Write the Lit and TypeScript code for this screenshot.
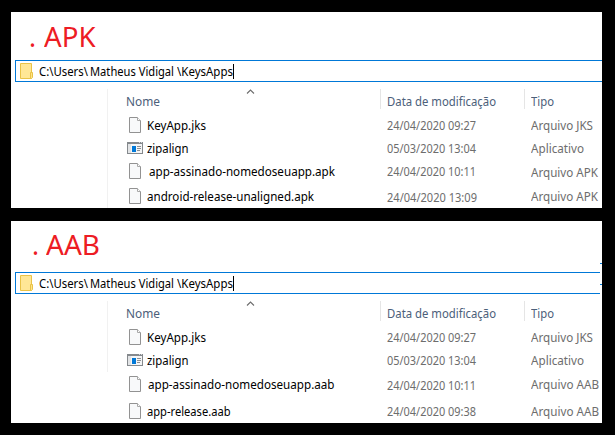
import { LitElement, html, svg, css, nothing } from "lit";
import { customElement, property } from "lit/decorators.js";
import { classMap } from "lit/directives/class-map.js";
import { styleMap } from "lit/directives/style-map.js";

interface Cell { text: string; width: number; dx?: number; dy?: number; }
interface FileRow { kind: "file" | "app"; gap: number; name: Cell; date: Cell; type: Cell; }
interface Panel { id: string; title: Cell; rows: FileRow[]; }

const panels: Panel[] = [
  {
    id: "apk",
    title: { text: "APK", width: 51.5 },
    rows: [
      { kind: "file", gap: 7, name: { text: "KeyApp.jks", width: 59 }, date: { text: "24/04/2020 09:27", width: 89 }, type: { text: "Arquivo JKS", width: 62 } },
      { kind: "app", gap: 7, name: { text: "zipalign", width: 41.5 }, date: { text: "05/03/2020 13:04", width: 89 }, type: { text: "Aplicativo", width: 53 } },
      { kind: "file", gap: 9, name: { text: "app-assinado-nomedoseuapp.apk", width: 186, dx: 2 }, date: { text: "24/04/2020 10:11", width: 89 }, type: { text: "Arquivo APK", width: 67, dy: 1 } },
      { kind: "file", gap: 0, name: { text: "android-release-unaligned.apk", width: 167 }, date: { text: "24/04/2020 13:09", width: 90, dy: 1 }, type: { text: "Arquivo APK", width: 67 } },
    ],
  },
  {
    id: "aab",
    title: { text: "AAB", width: 54 },
    rows: [
      { kind: "file", gap: 7, name: { text: "KeyApp.jks", width: 59 }, date: { text: "24/04/2020 09:27", width: 89 }, type: { text: "Arquivo JKS", width: 62 } },
      { kind: "app", gap: 8, name: { text: "zipalign", width: 41.5 }, date: { text: "05/03/2020 13:04", width: 89 }, type: { text: "Aplicativo", width: 53 } },
      { kind: "file", gap: 11, name: { text: "app-assinado-nomedoseuapp.aab", width: 186.5, dx: 1 }, date: { text: "24/04/2020 10:11", width: 89, dy: 1 }, type: { text: "Arquivo AAB", width: 68 } },
      { kind: "file", gap: 0, name: { text: "app-release.aab", width: 83.5 }, date: { text: "24/04/2020 09:38", width: 89 }, type: { text: "Arquivo AAB", width: 68 } },
    ],
  },
];

/** A single line of text condensed or widened to an exact width. */
@customElement("fit-text")
class FitText extends LitElement {
  @property() text = "";
  @property({ type: Number }) width = 0;

  static styles = css`
    :host { display: block; white-space: pre; }
    .line { display: inline-block; transform-origin: 0 0; vertical-align: top; }
  `;

  render() {
    return html`<span class="line">${this.text}</span>`;
  }

  updated() {
    const line = this.renderRoot.querySelector<HTMLElement>(".line")!;
    this.style.width = `${this.width}px`;
    line.style.transform = "none";
    const natural = line.getBoundingClientRect().width;
    if (natural) line.style.transform = `scaleX(${this.width / natural})`;
  }
}

const fit = (c: Cell) => html`<fit-text .text=${c.text} .width=${c.width}
  style=${styleMap({ marginLeft: `${c.dx ?? 0}px`, marginTop: `${c.dy ?? 0}px` })}></fit-text>`;

const fileIcon = html`<svg class="icon" width="16" height="16" viewBox="0 0 16 16">
  ${svg`<path d="M2.5 .5h8l3 3v12h-11z" fill="#f8f9fa" stroke="#929292"/>
  <path d="M10.5 .5v3h3" fill="#fff" stroke="#a8a8a8"/>`}
</svg>`;

const appIcon = html`<svg class="icon" width="16" height="12" viewBox="0 0 16 12" shape-rendering="crispEdges">
  ${svg`<rect width="16" height="12" fill="#85898d"/>
  <rect x="1" y="2" width="14" height="9" fill="#f4f5f6"/>
  <rect x="1" y="2" width="3" height="9" fill="#e2e4e6"/>
  <rect x="12" y="0" width="1" height="1" fill="#d5d7d9"/><rect x="14" y="0" width="1" height="1" fill="#d5d7d9"/>
  <rect x="5" y="4" width="4" height="6" fill="#0078d7"/>
  <path d="M10 4.5h4M10 6.5h4M10 8.5h3" stroke="#8c8f92"/>`}
</svg>`;

const folderIcon = html`<svg width="13" height="16" viewBox="0 0 13 16">
  ${svg`<path d="M.5 .5h11v15h-11z" fill="#ffe796" stroke="#e9c347"/>
  <path d="M10.5 9.5h2v5l-1 1h-1z" fill="#ffe389" stroke="#e9c347"/>`}
</svg>`;

@customElement("explorer-panel")
class ExplorerPanel extends LitElement {
  @property({ attribute: false }) panel!: Panel;

  static styles = css`
    :host { display: block; }
    .panel { background: #fff; overflow: hidden; display: flex; flex-direction: column; }
    .apk { height: 196px; }
    .aab { height: 202px; }
    .title { display: flex; color: #ed1c24; font-size: 27px; line-height: 36px; box-sizing: border-box; flex: none; }
    .apk .title { height: 48px; padding: 7px 0 0 18px; gap: 8px; }
    .aab .title { height: 51px; padding: 6px 0 0 21px; gap: 7px; }
    .address { display: flex; box-sizing: border-box; height: 22px; flex: none; margin-left: 4px; padding: 2px 0 0 4px;
      border: 1px solid #0078d7; border-right: 0; color: #000; line-height: 16px; position: relative; }
    .aab .address { margin-right: 2px; }
    .path { display: flex; padding: 1px 0 0 6px; }
    .caret { width: 1px; height: 15px; margin-top: 1px; background: #000; }
    .stub { position: absolute; right: -2px; width: 2px; height: 1px; background: #0078d7; }
    .upper { top: -10px; }
    .lower { top: 11px; }
    .body { display: flex; flex: 1; min-height: 0; padding-top: 7px; }
    .nav { width: 96px; border-right: 1px solid #f1f1f1; }
    .aab .nav { height: 71px; }
    .list { flex: 1; min-width: 0; line-height: 16px; }
    .header, .row { display: grid; grid-template-columns: 273px 144px 1fr; }
    .header { height: 20px; margin-bottom: 8px; color: #4c607a; position: relative; }
    .head { box-sizing: border-box; height: 20px; padding: 5px 0 0 6px; border-right: 1px solid #e5e5e5; }
    .first { padding-left: 18px; }
    .head:last-of-type { border: 0; }
    .sort { position: absolute; left: 138px; top: 0; }
    .row { height: 16px; color: #6d6d6d; }
    .name { display: flex; align-items: flex-start; padding-left: 19px; color: #000; }
    .icon { flex: none; margin-right: 4px; }
    .app .icon { margin-top: 2px; }
    .name fit-text { padding-top: 1px; }
    .cell { padding: 1px 0 0 6px; }
  `;

  render() {
    const p = this.panel;
    return html`
      <section class=${classMap({ panel: true, [p.id]: true })}>
        <div class="title">${fit({ text: ".", width: 7 })}${fit(p.title)}</div>
        <div class="address">
          ${folderIcon}
          <div class="path">
            ${fit({ text: "C:\\Users\\", width: 49 })}
            ${fit({ text: "Matheus Vidigal", width: 84, dx: 2 })}
            ${fit({ text: "\\KeysApps", width: 56, dx: 3 })}
          </div>
          <div class="caret"></div>
          ${p.id === "aab" ? html`<i class="stub upper"></i><i class="stub lower"></i>` : nothing}
        </div>
        <div class="body">
          <div class="nav"></div>
          <div class="list">
            <div class="header">
              <div class="head first">${fit({ text: "Nome", width: 34 })}</div>
              <div class="head">${fit({ text: "Data de modificação", width: 109 })}</div>
              <div class="head">${fit({ text: "Tipo", width: 23 })}</div>
              <svg class="sort" width="9" height="5" viewBox="0 0 9 5"><path d="M1 4.5l3.5-3.5L8 4.5" fill="none" stroke="#6d6d6d" stroke-width="1.1"/></svg>
            </div>
            ${p.rows.map((r) => html`
              <div class="row" style=${styleMap({ marginBottom: `${r.gap}px` })}>
                <div class="name ${r.kind}">${r.kind === "app" ? appIcon : fileIcon}${fit(r.name)}</div>
                <div class="cell">${fit(r.date)}</div>
                <div class="cell">${fit(r.type)}</div>
              </div>`)}
          </div>
        </div>
      </section>`;
  }
}

@customElement("app-root")
class AppRoot extends LitElement {
  static styles = css`
    :host { display: flex; flex-direction: column; gap: 13px; box-sizing: border-box; width: 615px; height: 435px;
      padding: 12px 13px 12px 11px; background: #000; overflow: hidden;
      font: 12px/16px "Noto Sans", "Open Sans", sans-serif; }
  `;

  render() {
    return html`${panels.map((p) => html`<explorer-panel .panel=${p}></explorer-panel>`)}`;
  }
}
